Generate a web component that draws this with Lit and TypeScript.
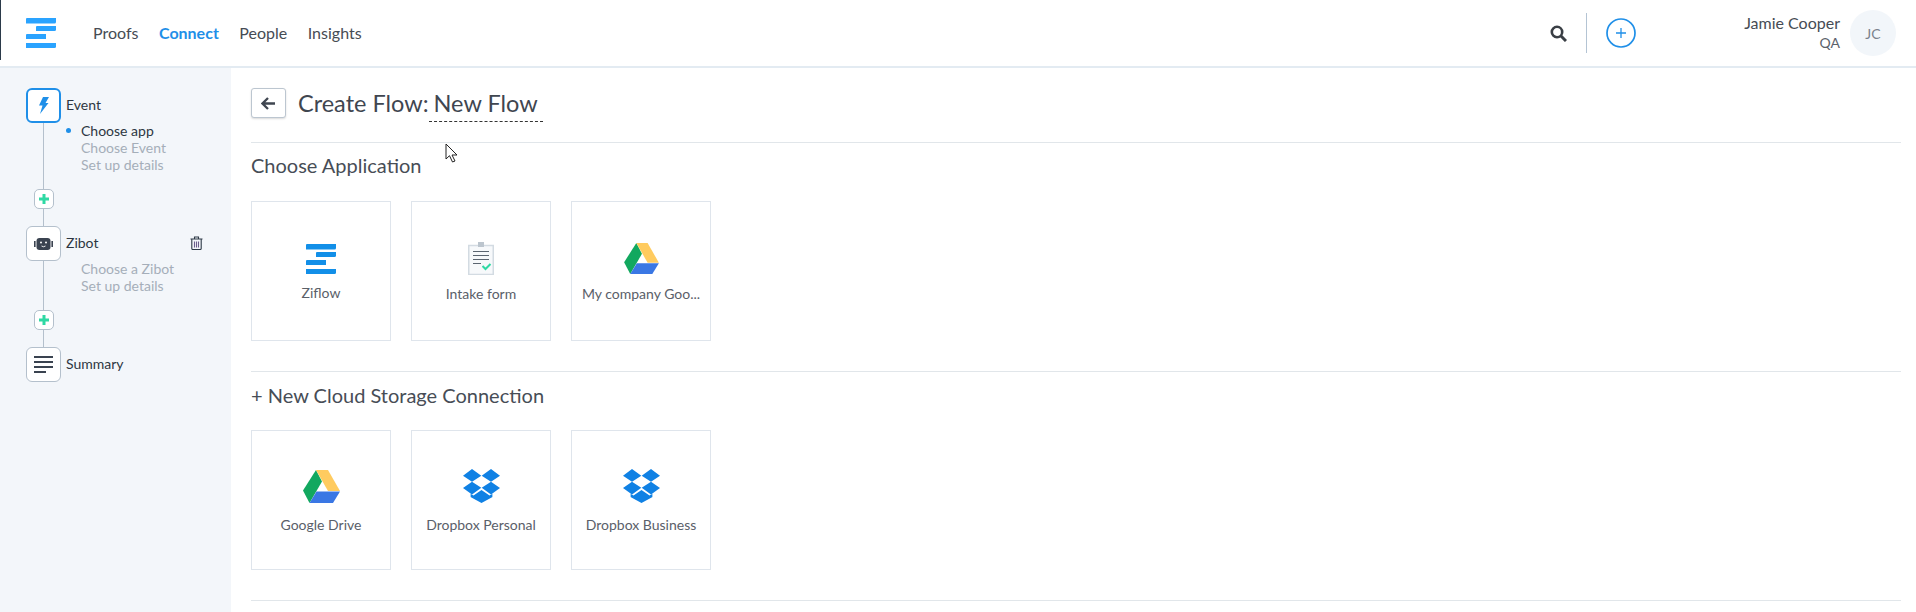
import { LitElement, html, css } from "lit";
import { customElement } from "lit/decorators.js";

const logo = (c: string) => html`<svg class="logo" viewBox="0 0 30 30" width="30" height="30" fill="${c}">
  <path d="M1 0h29v4q0 1.500-1.500 1.500H0V1q0-1 1-1z"/>
  <path d="M11 8h19v3.500q0 1.500-1.500 1.500H10V9q0-1 1-1z"/>
  <path d="M1 16h19v5H0v-4q0-1 1-1z"/>
  <path d="M0 25h30v3.500q0 1.500-1.500 1.500H0z"/>
</svg>`;

const drive = (w: number, h: number) => html`<svg viewBox="0 0 37 33" width="${w}" height="${h}">
  <path fill="#12a85f" d="M13 0 0 20.500 6.500 33 19 11.500z"/>
  <path fill="#ffcb5f" d="M13 0h12l12 21H25z"/>
  <path fill="#3a77e4" d="M13.500 21.500H37L30 33H6.500z"/>
</svg>`;

const dropbox = html`<svg viewBox="0 0 37 34" width="37" height="34">
  <path fill="#1081e4" d="M9 0l9.300 6.800L9 12.800 0 6.800zM28 0l9 6.800-9 6-9.300-6zM9 12.800l9.300 6L9 25.400 0 19zM28 12.800l9 6.200-9 6.400-9.300-6.600z"/>
  <path fill="#1081e4" d="M18.500 21l8 5.500 3-1.800V28l-11 6-11-6v-3.300l3 1.800z"/>
  <path fill="none" stroke="#bcdcf8" stroke-width=".6" d="M7.500 25v3M29.500 25v3"/>
</svg>`;

const clipboard = html`<svg viewBox="0 0 26 33" width="26" height="33">
  <rect x=".75" y="3.500" width="24.500" height="29" fill="#f7f9fb" stroke="#d3dbe2" stroke-width="1.500"/>
  <rect x="10" y="0" width="6" height="5" fill="#bcc5ce"/>
  <path stroke="#5b6570" stroke-width="1" fill="none" d="M5 9.500h16M5 13.500h16M5 17.500h16M5 21.500h8"/>
  <path stroke="#2fd9a4" stroke-width="2" fill="none" d="M14.500 24l3 3 5-5"/>
</svg>`;

const bolt = html`<svg viewBox="0 0 10 17" width="10" height="17"><path fill="#1f8fe8" d="M4 0h6L6.500 6H9.500L1 17l2.500-8.500H0z"/></svg>`;

const bot = html`<svg viewBox="0 0 19 12" width="19" height="12">
  <rect x="0" y="3" width="1.600" height="6" fill="#3a4350"/>
  <rect x="17.400" y="3" width="1.600" height="6" fill="#3a4350"/>
  <rect x="2.500" y="0" width="14" height="12" rx="3" fill="#3a4350"/>
  <circle cx="7" cy="4.500" r="1" fill="#fff"/><circle cx="12" cy="4.500" r="1" fill="#fff"/>
  <path d="M7.500 8q2 1.500 4 0" stroke="#fff" stroke-width=".9" fill="none"/>
</svg>`;

const lines = html`<svg viewBox="0 0 19 17" width="19" height="17" fill="#3a4350">
  <rect width="19" height="2" y="0"/><rect width="19" height="2" y="5"/><rect width="19" height="2" y="10"/><rect width="12" height="2" y="15"/>
</svg>`;

const trash = html`<svg viewBox="0 0 13 14" width="13" height="14" fill="none" stroke="#2e3a47" stroke-width="1.100">
  <path d="M.500 3h12M4.500 3V1h4v2M1.800 3v9.500q0 1 1 1h7.400q1 0 1-1V3"/>
  <path stroke="#6b5e8c" d="M4.500 5.500v6M6.500 5.500v6M8.500 5.500v6"/>
</svg>`;

@customElement("app-root")
export class AppRoot extends LitElement {
  static styles = css`
    :host { display: flex; flex-direction: column; height: 100vh; overflow: hidden; position: relative; background: #fff;
      font-family: "Lato", "Open Sans", sans-serif; color: #464c54; }
    header { display: flex; align-items: center; height: 66px; border-bottom: 2px solid #e3ebf2; flex: none; }
    .edge { width: 1px; height: 60px; background: #2b3a4a; align-self: flex-start; }
    .logo { display: block; }
    header .logo { margin-left: 25px; }
    nav { display: flex; gap: 20.5px; margin-left: 37px; font-size: 16px; margin-top: -2px; }
    nav a.on { color: #1f8fe8; font-weight: 700; }
    .right { margin-left: auto; display: flex; align-items: center; margin-right: 20px; }
    .search { display: block; }
    .divider { width: 1px; height: 40px; background: #b4c4d4; margin: 0 19px; }
    .add { display: block; }
    .user { margin-left: 108px; text-align: right; font-size: 16px; line-height: 20px; margin-right: 10px; }
    .user small { display: block; font-size: 14px; color: #5b626b; }
    .avatar { width: 46px; height: 46px; border-radius: 50%; background: #f2f6fa; display: flex; align-items: center; justify-content: center; font-size: 14px; color: #7a828c; }
    .body { display: flex; flex: 1; min-height: 0; }
    aside { width: 231px; flex: none; background: #f3f6fa; padding: 20px 28px 0 26px; box-sizing: border-box; font-size: 14px; color: #2d3642; }
    .node { display: flex; align-items: center; height: 35px; }
    .box { width: 35px; height: 35px; box-sizing: border-box; border: 1px solid #b4c0cc; border-radius: 6px; background: #fff; display: flex; align-items: center; justify-content: center; flex: none; }
    .box.active { border: 2px solid #1f8fe8; }
    .node span { margin-left: 5px; padding-bottom: 2px; }
    .node .del { display: block; margin-left: auto; margin-top: -2px; }
    .node .del svg { display: block; }
    .branch { display: flex; }
    .rail { width: 35px; display: flex; flex-direction: column; align-items: center; flex: none; }
    .line { width: 1px; background: #b4c0cc; flex: 1; }
    .line.short { flex: none; height: 17px; }
    .plus { width: 20px; height: 20px; box-sizing: border-box; border: 1px solid #b4c0cc; border-radius: 5px; background: #fff; display: flex; align-items: center; justify-content: center; flex: none; }
    .subs { list-style: none; margin: -1px 0 0; padding: 0; line-height: 17px; color: #a5aeb9; }
    .subs li { display: flex; align-items: center; }
    .bullet { width: 20px; display: flex; justify-content: flex-start; padding-left: 5px; box-sizing: border-box; }
    .bullet.dot::before { content: ""; width: 5px; height: 5px; border-radius: 50%; background: #1f8fe8; }
    .subs li.cur { color: #2d3642; }
    .b1 { height: 103px; }
    .b2 { height: 86px; }
    main { flex: 1; min-width: 0; padding: 20px 15px 0 20px; box-sizing: border-box; }
    .title { display: flex; align-items: center; height: 30px; font-size: 23.5px; color: #3f4650; }
    .back { width: 35px; height: 30px; box-sizing: border-box; border: 1px solid #bcc6d0; border-radius: 3px; background: #fff; display: flex; align-items: center; justify-content: center; box-shadow: 0 1px 2px rgba(0,0,0,.15); margin-right: 12px; }
    .flow { border-bottom: 1px dashed #333; padding: 0 5px 5px; margin-top: 6px; line-height: 26px; }
    hr { border: 0; border-top: 1px solid #e1e6ea; margin: 0; }
    .t hr { margin-top: 24px; }
    h2 { margin: 0; font-weight: 400; font-size: 20px; color: #474d56; line-height: 24px; padding: 11px 0 23px; }
    h2.first { padding: 10px 0 24px; }
    .cards { display: flex; gap: 20px; padding-bottom: 30px; }
    .card { width: 140px; height: 140px; box-sizing: border-box; border: 1px solid #dfe5ec; display: flex; flex-direction: column; align-items: center; padding-top: 36px; font-size: 14px; color: #5a6069; }
    .ico { height: 42px; display: flex; align-items: center; justify-content: center; flex: none; }
    .ico svg { display: block; }
    .lbl { margin-top: 3px; line-height: 20px; text-align: center; white-space: nowrap; }
    .card.up .ico { margin-top: -1px; }
    .card.up .lbl { margin-top: 5px; }
    .r2 .card { padding-top: 34px; }
    .r2 .lbl { margin-top: 8px; }
    .cursor { position: absolute; left: 445px; top: 143px; }
  `;

  plus() {
    return html`<div class="plus"><svg width="12" height="12" viewBox="0 0 12 12"><path d="M6 1v10M1 6h10" stroke="#2fd9a4" stroke-width="3"/></svg></div>`;
  }

  card(icon: unknown, label: string, cls = "") {
    return html`<div class="card ${cls}"><div class="ico">${icon}</div><div class="lbl">${label}</div></div>`;
  }

  render() {
    return html`
      <header>
        <div class="edge"></div>
        ${logo("#2aa3ff")}
        <nav><a>Proofs</a><a class="on">Connect</a><a>People</a><a>Insights</a></nav>
        <div class="right">
          <svg class="search" width="17" height="17" viewBox="0 0 17 17" fill="none" stroke="#3a3f45"><circle cx="7" cy="7" r="5.200" stroke-width="2.600"/><path d="M11 11l5 5" stroke-width="3"/></svg>
          <div class="divider"></div>
          <svg class="add" width="30" height="30" viewBox="0 0 30 30" fill="none" stroke="#1f8fe8"><circle cx="15" cy="15" r="14" stroke-width="1.700"/><path d="M15 10v10M10 15h10" stroke-width="1.300"/></svg>
          <div class="user">Jamie Cooper<small>QA</small></div>
          <div class="avatar">JC</div>
        </div>
      </header>
      <div class="body">
        <aside>
          <div class="node"><div class="box active">${bolt}</div><span>Event</span></div>
          <div class="branch b1">
            <div class="rail"><div class="line"></div>${this.plus()}<div class="line short"></div></div>
            <ul class="subs">
              <li class="cur"><i class="bullet dot"></i>Choose app</li>
              <li><i class="bullet"></i>Choose Event</li>
              <li><i class="bullet"></i>Set up details</li>
            </ul>
          </div>
          <div class="node"><div class="box">${bot}</div><span>Zibot</span><div class="del">${trash}</div></div>
          <div class="branch b2">
            <div class="rail"><div class="line"></div>${this.plus()}<div class="line short"></div></div>
            <ul class="subs">
              <li><i class="bullet"></i>Choose a Zibot</li>
              <li><i class="bullet"></i>Set up details</li>
            </ul>
          </div>
          <div class="node"><div class="box">${lines}</div><span>Summary</span></div>
        </aside>
        <main>
          <div class="t">
            <div class="title">
              <div class="back"><svg width="15" height="13" viewBox="0 0 15 13" fill="none" stroke="#3f4650" stroke-width="2.300"><path d="M14 6.500H2M7 1L1.500 6.500 7 12"/></svg></div>
              <span>Create Flow:</span><span class="flow">New Flow</span>
            </div>
            <hr />
          </div>
          <h2 class="first">Choose Application</h2>
          <div class="cards">
            ${this.card(logo("#128fe8"), "Ziflow")}
            ${this.card(clipboard, "Intake form", "up")}
            ${this.card(drive(35, 31), "My company Goo...", "up")}
          </div>
          <hr />
          <h2>+ New Cloud Storage Connection</h2>
          <div class="cards r2">
            ${this.card(drive(37, 33), "Google Drive")}
            ${this.card(dropbox, "Dropbox Personal")}
            ${this.card(dropbox, "Dropbox Business")}
          </div>
          <hr />
        </main>
      </div>
      <svg class="cursor" width="14" height="21" viewBox="0 0 14 21"><path d="M1 1v15l3.500-3.300L7.500 19l2.500-1-3-6h5z" fill="#fff" stroke="#222" stroke-width="1"/></svg>
    `;
  }
}
